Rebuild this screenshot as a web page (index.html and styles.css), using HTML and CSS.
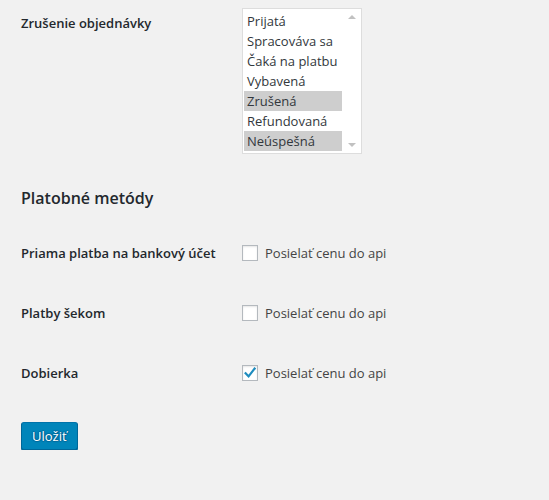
FILE: index.html
```html
<!DOCTYPE html>
<html lang="sk">
<head>
<meta charset="utf-8">
<link rel="stylesheet" href="styles.css">
</head>
<body>
<div class="wrap">
  <div class="row row-select">
    <div class="label">Zrušenie objednávky</div>
    <div class="field">
      <div class="listbox">
        <ul class="options">
          <li>Prijatá</li>
          <li>Spracováva sa</li>
          <li>Čaká na platbu</li>
          <li>Vybavená</li>
          <li class="sel">Zrušená</li>
          <li>Refundovaná</li>
          <li class="sel">Neúspešná</li>
        </ul>
        <div class="scrollbar">
          <span class="arrow up"></span>
          <span class="arrow down"></span>
        </div>
      </div>
    </div>
  </div>

  <h2 class="heading">Platobné metódy</h2>

  <div class="row">
    <div class="label">Priama platba na bankový účet</div>
    <label class="field check"><span class="box"></span>Posielať cenu do api</label>
  </div>
  <div class="row">
    <div class="label">Platby šekom</div>
    <label class="field check"><span class="box"></span>Posielať cenu do api</label>
  </div>
  <div class="row">
    <div class="label">Dobierka</div>
    <label class="field check"><span class="box checked"><svg viewBox="0 0 16 16" width="16" height="16"><path d="M3.6 8.2 L6.6 11.4 L12.6 3.6" fill="none" stroke="#1e8cbe" stroke-width="2.2" stroke-linecap="square"/></svg></span>Posielať cenu do api</label>
  </div>

  <div class="actions">
    <button class="btn">Uložiť</button>
  </div>
</div>
</body>
</html>
```

FILE: styles.css
```css
html, body {
  margin: 0;
  padding: 0;
  background: #f1f1f1;
}
body {
  font-family: "Open Sans", "Noto Sans", sans-serif;
  font-size: 13px;
  color: #444;
}
.wrap {
  padding: 8px 0 0 21px;
}
.row {
  display: flex;
  align-items: center;
  height: 60px;
}
.row-select {
  align-items: flex-start;
  height: auto;
}
.row-select .label {
  padding-top: 6px;
}
.label {
  width: 221px;
  flex: none;
  font-weight: 600;
  color: #23282d;
}
.listbox {
  display: flex;
  width: 118px;
  height: 144px;
  border: 1px solid #ddd;
  background: #fff;
}
.options {
  list-style: none;
  margin: 0;
  padding: 2px 0 0 1px;
  width: 98px;
  color: #32373c;
}
.options li {
  height: 20px;
  line-height: 20px;
  padding-left: 3px;
  white-space: nowrap;
  overflow: hidden;
}
.options li.sel {
  background: #cecece;
}
.scrollbar {
  flex: 1;
  position: relative;
}
.arrow {
  position: absolute;
  left: 6px;
  width: 0;
  height: 0;
  border-left: 4px solid transparent;
  border-right: 4px solid transparent;
}
.arrow.up {
  top: 6px;
  border-bottom: 4px solid #c1c1c1;
}
.arrow.down {
  bottom: 6px;
  border-top: 4px solid #c1c1c1;
}
.heading {
  margin: 31px 0 0;
  height: 38px;
  font-size: 16px;
  font-weight: 600;
  color: #23282d;
  line-height: 26px;
}
.check {
  display: flex;
  align-items: center;
  gap: 7px;
  color: #444;
}
.box {
  width: 14px;
  height: 14px;
  border: 1px solid #b4b9be;
  background: #fff;
  box-shadow: inset 0 1px 2px rgba(0,0,0,0.1);
  position: relative;
}
.box svg {
  position: absolute;
  left: -1px;
  top: -1px;
}
.actions {
  padding-top: 19px;
}
.btn {
  font-family: inherit;
  font-size: 13px;
  height: 28px;
  line-height: 26px;
  padding: 0 10px;
  color: #fff;
  background: #0085ba;
  border: 1px solid;
  border-color: #0073aa #006799 #006799;
  border-radius: 3px;
  box-shadow: 0 1px 0 #006799;
  text-shadow: 0 -1px 1px #006799, 1px 0 1px #006799, 0 1px 1px #006799, -1px 0 1px #006799;
}
```
